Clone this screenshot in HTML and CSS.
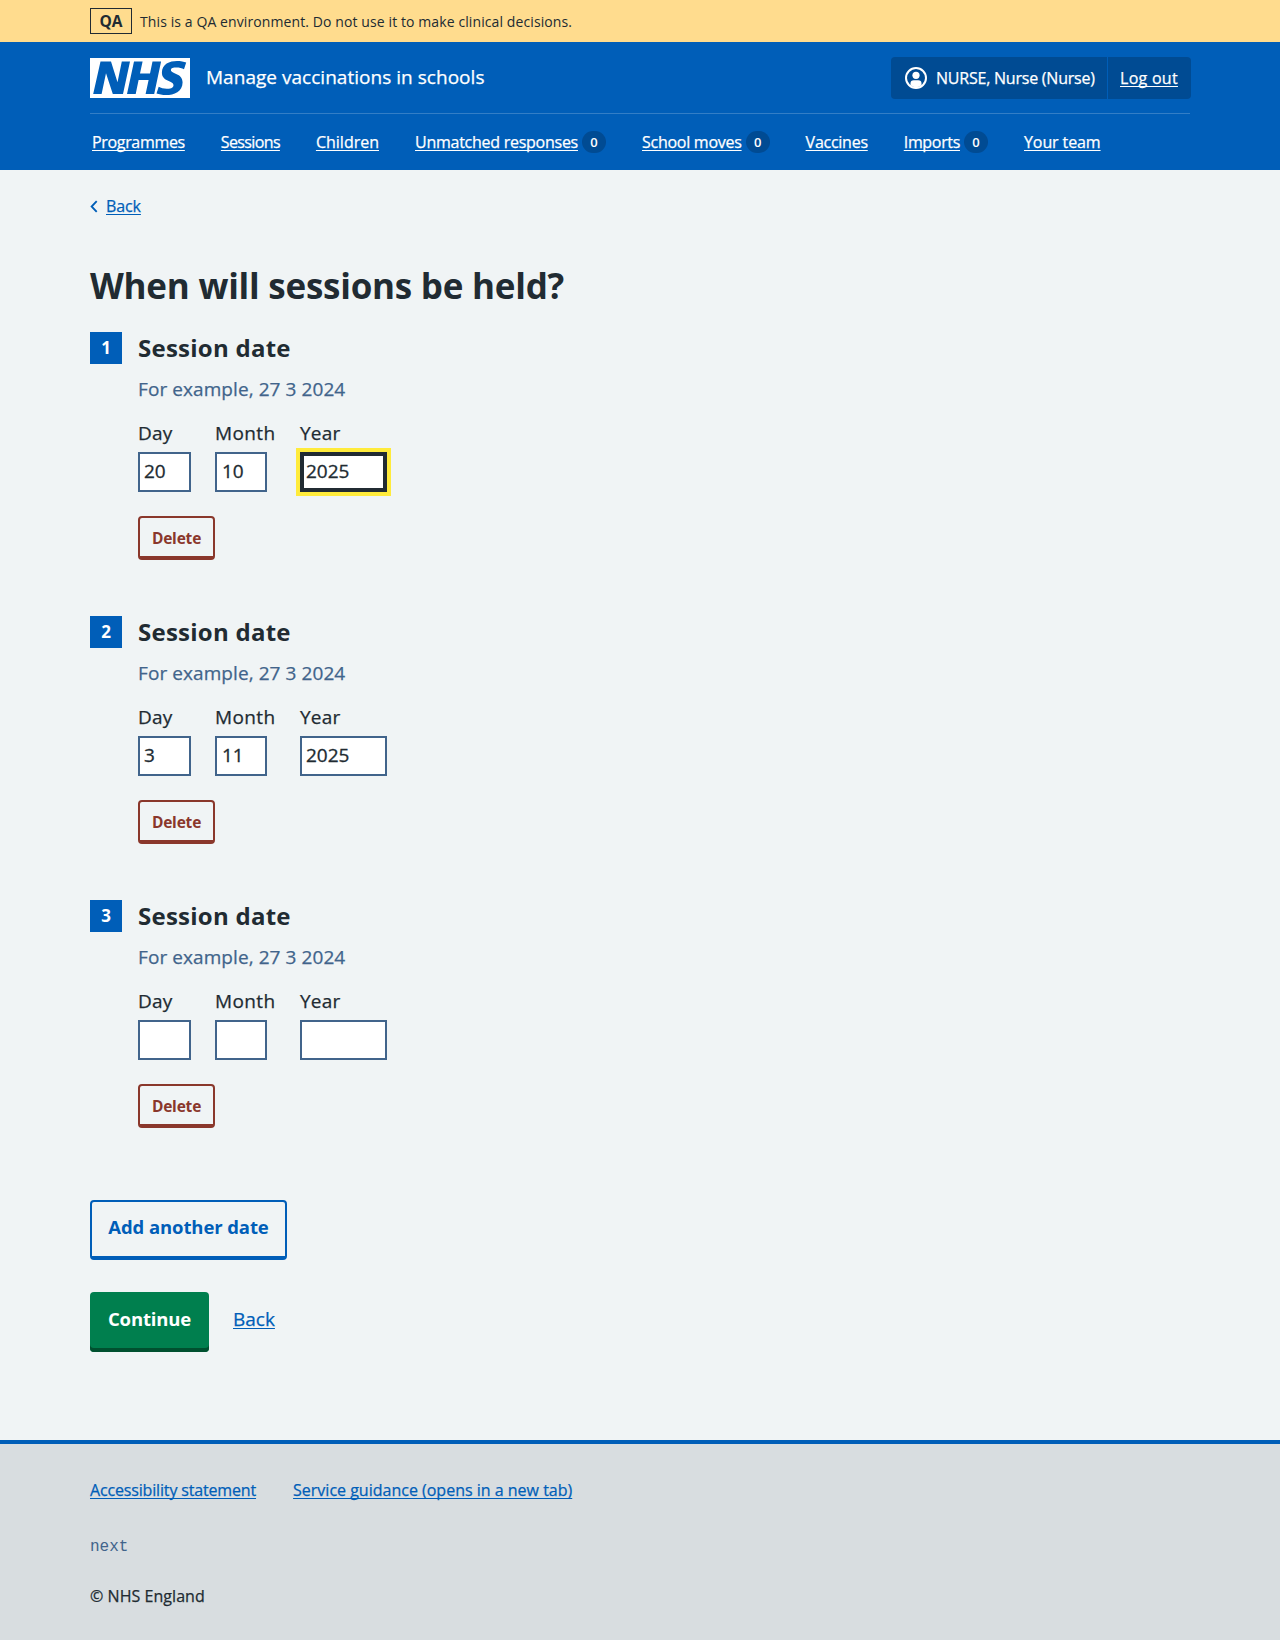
FILE: index.html
```html
<!DOCTYPE html>
<html lang="en">
<head>
<meta charset="utf-8">
<title>When will sessions be held?</title>
<link rel="stylesheet" href="styles.css">
</head>
<body>
<div class="banner"><div class="container banner-inner"><strong class="env-tag">QA</strong><span class="banner-text">This is a QA environment. Do not use it to make clinical decisions.</span></div></div>
<header class="header">
  <div class="container">
    <div class="header-top">
      <div class="brand">
        <svg class="logo" viewBox="0 0 100 40" aria-label="NHS"><path fill="#fff" d="M0 0h100v40H0z"/><path fill="#005eb8" d="M10.500 3.500H21L27.500 24.300L31.800 3.500H40L33 36H22.800L16 15.200L11.600 36H3.200zM44 3.500H52.600L50 15.600H60L62.500 3.500H71.100L64.200 36H55.600L58.600 22H48.600L45.700 36H37zM96.200 4.600L94 11.200C92 10.200 89.300 9.500 86.200 9.500C83.400 9.500 80.900 10 80.900 12.100C80.900 16.100 92.600 15.100 92.600 24.200C92.600 33.800 84.200 37 75.900 37C72.500 37 69 36.300 66.500 35.500L68.700 28.700C70.700 29.900 73.800 30.700 76.700 30.700C79.600 30.700 83.500 30.200 83.500 27.200C83.500 22.300 71.900 23.900 71.900 14.800C71.900 6 79.600 3 87 3C90.800 3 93.900 3.600 96.200 4.600z"/></svg>
        <span class="service">Manage vaccinations in schools</span>
      </div>
      <div class="account">
        <div class="user">
          <svg class="avatar" viewBox="0 0 22 22"><circle cx="11" cy="11" r="10" fill="none" stroke="#fff" stroke-width="2"/><circle cx="11" cy="8.300" r="3.600" fill="#fff"/><path fill="#fff" d="M5.500 18v-1.500a3.300 3.300 0 0 1 3.300-3.300h4.400a3.300 3.300 0 0 1 3.300 3.300V18c-2.800 3-8.200 3-11 0z"/></svg>
          <span>NURSE, Nurse (Nurse)</span>
        </div>
        <div class="logout"><a href="#">Log out</a></div>
      </div>
    </div>
    <nav class="nav">
      <a class="tight" href="#">Programmes</a>
      <a class="tightest" href="#">Sessions</a>
      <a href="#">Children</a>
      <div class="nav-item"><a class="snug" href="#">Unmatched responses</a><span class="count">0</span></div>
      <div class="nav-item"><a class="snug" href="#">School moves</a><span class="count">0</span></div>
      <a class="snug" href="#">Vaccines</a>
      <div class="nav-item"><a class="tight" href="#">Imports</a><span class="count">0</span></div>
      <a class="team" href="#">Your team</a>
    </nav>
  </div>
</header>
<main class="container main">
  <div class="back"><svg class="chevron" viewBox="0 0 7 12"><path d="M6 1L1.300 6L6 11" fill="none" stroke="#005eb8" stroke-width="1.700"/></svg><a href="#">Back</a></div>
  <h1>When will sessions be held?</h1>
  <ol class="dates">
    <li class="session">
      <span class="number">1</span>
      <div class="session-body">
        <h2>Session date</h2>
        <p class="hint">For example, 27 3 2024</p>
        <div class="fields">
          <label class="field">Day<input class="input day" value="20"></label>
          <label class="field month-field">Month<input class="input month" value="10"></label>
          <label class="field">Year<input class="input year focused" value="2025"></label>
        </div>
        <button class="delete">Delete</button>
      </div>
    </li>
    <li class="session">
      <span class="number">2</span>
      <div class="session-body">
        <h2>Session date</h2>
        <p class="hint">For example, 27 3 2024</p>
        <div class="fields">
          <label class="field">Day<input class="input day" value="3"></label>
          <label class="field month-field">Month<input class="input month" value="11"></label>
          <label class="field">Year<input class="input year" value="2025"></label>
        </div>
        <button class="delete">Delete</button>
      </div>
    </li>
    <li class="session">
      <span class="number">3</span>
      <div class="session-body">
        <h2>Session date</h2>
        <p class="hint">For example, 27 3 2024</p>
        <div class="fields">
          <label class="field">Day<input class="input day"></label>
          <label class="field month-field">Month<input class="input month"></label>
          <label class="field">Year<input class="input year"></label>
        </div>
        <button class="delete">Delete</button>
      </div>
    </li>
  </ol>
  <button class="button add">Add another date</button>
  <div class="actions"><button class="button continue">Continue</button><a class="cancel" href="#">Back</a></div>
</main>
<footer class="footer">
  <div class="container">
    <div class="footer-links"><a class="accessibility" href="#">Accessibility statement</a><a href="#">Service guidance (opens in a new tab)</a></div>
    <p class="version">next</p>
    <p class="copyright">© NHS England</p>
  </div>
</footer>
</body>
</html>
```

FILE: styles.css
```css
* { box-sizing: border-box; }
body { margin: 0; background: #f0f4f5; color: #212b32; font: 16px/24px "Open Sans", sans-serif; -webkit-text-stroke: .25px; }
h1, h2, button, .env-tag, .number, .count, .version, .banner-text { -webkit-text-stroke: 0; }
.container { width: 1100px; margin: 0 auto; }
h1, h2, p, ol { margin: 0; padding: 0; }
a { color: #005eb8; text-decoration: underline; text-decoration-thickness: 1px; text-underline-offset: 2px; text-decoration-skip-ink: none; }

.banner { background: #ffdc8e; height: 42px; padding-top: 8px; }
.banner-inner { display: flex; align-items: center; gap: 8px; }
.env-tag { width: 42px; height: 26px; border: 1px solid #212b32; text-align: center; font-weight: 700; font-size: 15.5px; }
.banner-text { padding-top: 2px; font-size: 14px; letter-spacing: .1px; }

.header { background: #005eb8; color: #fff; height: 128px; padding-top: 15px; }
.header a { color: #fff; }
.header-top { display: flex; justify-content: space-between; width: 1101px; height: 42px; }
.brand { display: flex; align-items: center; gap: 16px; }
.logo { width: 100px; height: 40px; }
.service { font-size: 19px; padding-bottom: 3px; letter-spacing: .03px; }
.account { display: flex; background: #004b93; border-radius: 4px; width: 300px; }
.user { display: flex; align-items: center; gap: 9px; width: 217px; padding-left: 14px; border-right: 1px solid #005eb8; letter-spacing: -.22px; white-space: nowrap; }
.avatar { width: 22px; height: 22px; flex: none; }
.logout { display: flex; align-items: center; padding-left: 12px; letter-spacing: .28px; }
.nav { display: flex; align-items: center; gap: 36px; height: 57px; margin-top: 14px; padding-left: 2px; border-top: 1px solid #337ec6; white-space: nowrap; }
.nav-item { display: flex; align-items: center; gap: 4px; }
.snug { letter-spacing: -.26px; }
.tight { letter-spacing: -.33px; }
.tightest { letter-spacing: -.63px; }
.team { letter-spacing: -.1px; }
.count { width: 24px; height: 22px; border-radius: 12px; background: #004b93; font: 600 13px/22px "Open Sans", sans-serif; text-align: center; }

.main { height: 1270px; padding-top: 24px; }
.back { display: flex; align-items: center; gap: 8px; letter-spacing: -.1px; }
.chevron { width: 8px; height: 13px; }
h1 { margin: 46px 0 24px; font-size: 35px; line-height: 44px; font-weight: 700; letter-spacing: -.24px; }
.dates { list-style: none; }
.session { display: flex; gap: 16px; height: 284px; }
.number { width: 32px; height: 32px; background: #005eb8; color: #fff; font-size: 17px; line-height: 31px; font-weight: 700; text-align: center; }
h2 { padding-top: 1px; font-size: 24px; line-height: 30px; font-weight: 700; letter-spacing: .25px; }
.hint { margin: 12px 0 16px; font-size: 19px; line-height: 28px; letter-spacing: .08px; color: #41648b; }
.fields { display: flex; margin-bottom: 24px; }
.field { display: flex; flex-direction: column; gap: 5px; width: 77px; font-size: 19px; line-height: 28px; letter-spacing: .2px; }
.month-field { width: 85px; letter-spacing: .4px; }
.input { height: 40px; padding: 0 4px 3px; border: 2px solid #41648b; border-radius: 0; background: #fff; color: #212b32; font: 19px "Open Sans", sans-serif; outline: 0; -webkit-text-stroke: .3px; }
.day { width: 53px; }
.month { width: 52px; padding-left: 5px; }
.year { width: 87px; }
.focused { padding: 0 2px 3px; border: 4px solid #212b32; box-shadow: 0 0 0 4px #ffeb3b; }
.delete { display: block; width: 77px; height: 44px; padding: 1px 0 0; background: none; border: 2px solid #8a372b; border-bottom-width: 4px; border-radius: 4px; color: #8a372b; font: 700 15.5px/24px "Open Sans", sans-serif; letter-spacing: -.2px; }
.button { display: block; height: 60px; padding: 0 0 4px; border-radius: 4px; font: 700 18.5px/28px "Open Sans", sans-serif; letter-spacing: -.1px; white-space: nowrap; }
.add { width: 197px; margin-top: 16px; background: none; border: 2px solid #005eb8; border-bottom-width: 4px; color: #005eb8; }
.actions { display: flex; gap: 24px; margin-top: 32px; }
.continue { width: 119px; padding: 0 0 7px; border: 0; background: #007f4e; box-shadow: inset 0 -4px #00502f; color: #fff; letter-spacing: -.15px; }
.cancel { margin-top: 13px; font-size: 19px; line-height: 28px; }

.footer { height: 200px; padding-top: 34px; background: #d8dde0; border-top: 4px solid #005eb8; }
.footer-links { display: flex; gap: 37px; }
.accessibility { letter-spacing: -.16px; }
.version { margin-top: 33px; color: #41648b; font-family: "Liberation Mono", monospace; }
.copyright { margin-top: 25px; letter-spacing: .05px; }
```
